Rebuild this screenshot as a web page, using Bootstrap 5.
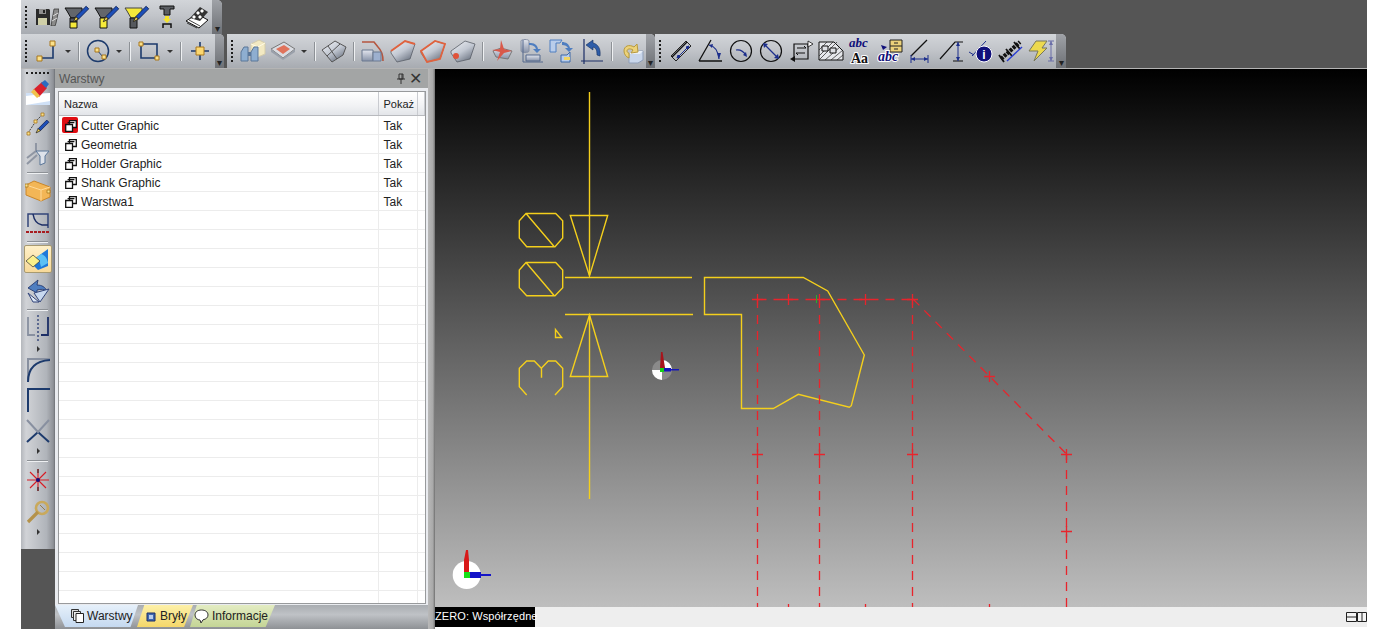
<!DOCTYPE html>
<html lang="pl">
<head>
    <meta charset="UTF-8">
    <meta name="viewport" content="width=device-width, initial-scale=1.0">
    <title>Warstwy</title>
    <link href="https://cdn.jsdelivr.net/npm/bootstrap@5.3.3/dist/css/bootstrap.min.css" rel="stylesheet">
    <script src="https://cdn.jsdelivr.net/npm/bootstrap@5.3.3/dist/js/bootstrap.bundle.min.js"></script>
    <style>
        html, body { height: 629px; overflow: hidden; background: #fff; }
        body { font-family: "Liberation Sans", Arial, sans-serif; font-size: 12px; color: #1c1c1c; }
        .cad-app { margin: 0 6px 0 21px; width: 1346px; height: 629px; background: #555; }
        .bar-row { height: 34px; }
        .bar-row-last { border-bottom: 1px solid #b4b4b4; height: 35px; }
        .tbar { height: 34px; background: linear-gradient(#d2d5d9, #c2c5ca 45%, #a7abb1); border-radius: 0 5px 0 0; }
        .tbar-mid { margin-left: 3px; }
        .tgrip { width: 11px; height: 100%; position: relative; }
        .tgrip::before { content: ""; position: absolute; left: 4px; top: 6px; bottom: 6px; border-left: 2px dotted #1e1e1e; }
        .tend { width: 9px; height: 100%; background: linear-gradient(#9fa2a7, #6d7075); position: relative; border-radius: 0 5px 0 0; }
        .tend-wide { width: 10px; margin-left: 2px; }
        .tend::after { content: "\25BE"; position: absolute; left: 0; right: 0; bottom: 0; line-height: 11px; text-align: center; font-size: 10px; color: #222; }
        .tbtn { width: 30px; height: 30px; flex: none; }
        .tcaret { width: 12px; flex: none; }
        .tcaret::after { content: ""; display: block; width: 0; height: 0; margin: 0 auto; border-left: 3px solid transparent; border-right: 3px solid transparent; border-top: 3px solid #333; }
        .tsep { width: 9px; flex: none; }
        .tsep::after { content: ""; display: block; margin: 0 auto; width: 2px; height: 19px; background: #eef0f2; border-left: 1px solid #8d9196; }
        .vbar-col { width: 34px; flex: none; }
        .vbar { height: 480px; background: linear-gradient(90deg, #b4b7bc, #d1d3d7 15%, #b0b4ba 75%, #8e9197 95%, #6d7075); }
        .vgrip { height: 8px; position: relative; }
        .vgrip::before { content: ""; position: absolute; left: 5px; right: 6px; top: 3px; border-top: 2px dotted #1e1e1e; }
        .vtool { height: 30px; }
        .vtool-on { margin: 1px 3px; height: 28px; background: linear-gradient(#fff0c8, #f7d999); border: 1px solid #a89a70; border-radius: 2px; }
        .vgap1 { height: 1px; } .vgap2 { height: 2px; } .vgap3 { height: 3px; }
        .vsep { display: flex; align-items: center; padding: 0 7px 0 6px; }
        .vsep::after { content: ""; flex: 1; height: 2px; background: #eef0f2; border-top: 1px solid #8d9196; }
        .vsep5 { height: 5px; } .vsep7 { height: 7px; } .vsep9 { height: 9px; }
        .vcaret { display: flex; align-items: center; justify-content: center; }
        .vcaret::after { content: ""; border-top: 3px solid transparent; border-bottom: 3px solid transparent; border-left: 3px solid #333; }
        .vcaret10 { height: 10px; } .vcaret12 { height: 12px; }
        .layers-panel { width: 373px; flex: none; background: #e9ebef; }
        .panel-title { height: 19px; background: #a3a5a5; color: #555; padding: 0 4px; font-size: 12px; }
        .panel-glyph { color: #333; width: 18px; text-align: center; }
        .panel-body { height: 517px; padding: 3px 2px 1px 3px; }
        .table-box { height: 513px; border: 1px solid #989a9c; background: #fff; overflow: hidden; }
        .layer-table { table-layout: fixed; width: 366px; border-collapse: collapse; }
        .layer-table > :not(caption) > * > * { padding: 0; box-shadow: none; background: transparent; }
        .layer-table thead th { height: 23px; padding: 2px 0 0 5px; font-size: 11px; font-weight: 400; background: linear-gradient(#fff, #f1f2f4 60%, #e3e5e9); border-right: 1px solid #c9cbd0; border-bottom: 1px solid #b8babe; vertical-align: middle; color: #222; }
        .layer-table tbody td { height: 19px; border-bottom: 1px solid #ececec; border-right: 1px solid #ececec; padding: 3px 0 0 5px; vertical-align: middle; color: #222; line-height: 1; }
        .layer-table tbody td:last-child { border-right: 0; }
        .layer-ico { width: 12px; height: 12px; margin: 0 4px 0 1px; vertical-align: -2px; }
        .layer-on { position: relative; }
        .layer-on::before { content: ""; position: absolute; left: 3px; top: 1px; width: 16px; height: 16px; background: #e00d12; border-radius: 2px; }
        .layer-on .layer-ico, .layer-on span { position: relative; }
        .tab-strip { height: 24px; background: linear-gradient(#a9adb1, #bfc2c6 40%, #8e9195); }
        .dock-tab { height: 22px; font-size: 12px; color: #222; }
        .dock-tab svg { margin-right: 3px; }
        .tab-blue { width: 83px; padding-left: 16px; background: linear-gradient(#e6f0fa, #c5d9f0); clip-path: polygon(0 0, 100% 0, 91% 100%, 12% 100%); }
        .tab-yellow { width: 56px; margin-left: -1px; padding-left: 9px; background: linear-gradient(#fdf0a8, #f4d76a); clip-path: polygon(13% 0, 100% 0, 84% 100%, 0 100%, 0 100%); }
        .tab-green { width: 85px; margin-left: -3px; padding-left: 4px; background: linear-gradient(#e3ecc2, #c4d596); clip-path: polygon(8% 0, 100% 0, 89% 100%, 0 100%); }
        .dock-split { width: 7px; flex: none; background: linear-gradient(90deg, #b9b9b9, #a9a9a9 70%, #6f6f6f); }
        .view-col { width: 932px; flex: none; background: #fff; }
        .view-canvas { display: block; width: 932px; height: 538px; }
        .view-status { height: 20px; background: #eeeeee; }
        .status-label { width: 100px; height: 20px; background: #000; color: #fff; font-size: 11px; letter-spacing: .1px; line-height: 18px; white-space: nowrap; }
        .halo-text { paint-order: stroke; stroke: #fff; stroke-width: 2px; }
    </style>
</head>
<body>

<svg width="0" height="0" class="position-absolute">
    <defs>
        <symbol id="pen" viewBox="0 0 14 14">
            <path d="M3 9 11 1l2 2-8 8z" fill="#1d4fb8" stroke="#0d1f55" stroke-width=".7"/>
            <path d="M3 9l-2 4 4-2z" fill="#f3d24a" stroke="#222" stroke-width=".7"/>
        </symbol>
        <symbol id="layers" viewBox="0 0 12 12">
            <path d="M4.500.7h6.800v6.800H4.500z" fill="#fff" stroke="#111" stroke-width="1.300"/>
            <path d="M2.600 2.600h6.800" stroke="#111" stroke-width="1.300"/>
            <path d="M.7 4.500h6.800v6.800H.7z" fill="#fff" stroke="#111" stroke-width="1.300"/>
        </symbol>
        <symbol id="patch" viewBox="0 0 26 24">
            <path d="M1 12 15 2l10 3-5 15-13 3-6-9z" fill="url(#patchFill)" stroke="#5a5f68" stroke-width=".8"/>
        </symbol>
        <linearGradient id="patchFill" x1="0" y1="0" x2=".7" y2="1">
            <stop offset="0" stop-color="#f1f3f6"/><stop offset=".55" stop-color="#c2c8d2"/><stop offset="1" stop-color="#6c7482"/>
        </linearGradient>
        <linearGradient id="steel" x1="0" y1="0" x2="0" y2="1">
            <stop offset="0" stop-color="#e3e6ee"/><stop offset="1" stop-color="#8792a8"/>
        </linearGradient>
    </defs>
</svg>

<div class="cad-app d-flex flex-column">

    <!-- gorny pasek -->
    <div class="bar-row d-flex">
        <div class="tbar d-flex align-items-center">
            <div class="tgrip"></div>
            <div class="tbtn d-flex align-items-center justify-content-center">
                <svg width="24" height="18" viewBox="0 0 24 18"><path d="M1 1h13l1 1v15H1z" fill="#2b2b2b"/><path d="M4 1h7v5H4z" fill="#8f8f8f"/><path d="M8 2h2v3H8z" fill="#222"/><path d="M3 10h9v7H3z" fill="#cfcfa8"/><path d="M16 18 19 1h5l-3 14-1 3z" fill="#8b8b8b" stroke="#2b2b2b" stroke-width=".7"/><path d="M18 8l5-3M17 13l5-3" stroke="#ddd"/></svg>
            </div>
            <div class="tbtn d-flex align-items-center justify-content-center">
                <svg width="26" height="24" viewBox="0 0 26 24"><path d="M1 3h17v3l-4 7H7L3 6z" fill="#63666b" stroke="#111"/><path d="M6 13h7v4H6z" fill="#55585d" stroke="#111"/><path d="M6 17h7v6H6z" fill="#f6ea3a" stroke="#111"/><use href="#pen" x="8" y="0" width="18" height="18"/></svg>
            </div>
            <div class="tbtn d-flex align-items-center justify-content-center">
                <svg width="26" height="24" viewBox="0 0 26 24"><path d="M1 3h17v3l-4 7H7L3 6z" fill="#63666b" stroke="#111"/><path d="M6 13h7v10H6z" fill="#f6ea3a" stroke="#111"/><use href="#pen" x="8" y="0" width="18" height="18"/></svg>
            </div>
            <div class="tbtn d-flex align-items-center justify-content-center">
                <svg width="26" height="24" viewBox="0 0 26 24"><path d="M1 3h17v3l-4 7H7L3 6z" fill="#f6ea3a" stroke="#444"/><path d="M6 13h7v10H6z" fill="#55585d" stroke="#111"/><use href="#pen" x="8" y="0" width="18" height="18"/></svg>
            </div>
            <div class="tbtn d-flex align-items-center justify-content-center">
                <svg width="18" height="24" viewBox="0 0 18 24"><path d="M2 1h14v3h-4v6H6V4H2z" fill="#5b5e63" stroke="#111"/><path d="M7 11h4v3h2l-4 4-4-4h2z" fill="#f4e32e"/><path d="M5 23v-4h8v4" fill="none" stroke="#111" stroke-width="1.500"/></svg>
            </div>
            <div class="tbtn d-flex align-items-center justify-content-center">
                <svg width="26" height="24" viewBox="0 0 26 24"><path d="M2 16 13 9l11 6-9 8z" fill="#fff" stroke="#111"/><path d="M6 13 16 2l8 5-8 9z" fill="#333"/><path d="M8 12l2-2 2 2-2 2zM12 8l2-2 2 2-2 2zM16 6l2-2 2 2-2 2zM14 12l2-2 2 2-2 2z" fill="#fff"/><path d="M3 18l10 5M5 15l11 6" stroke="#111" stroke-width=".8"/></svg>
            </div>
            <div class="tend tend-wide ms-auto"></div>
        </div>
    </div>

    <div class="bar-row bar-row-last d-flex">
        <div class="tbar d-flex align-items-center">
            <div class="tgrip"></div>
            <div class="tbtn d-flex align-items-center justify-content-center">
                <svg width="22" height="22" viewBox="0 0 22 22"><path d="M17 5v13H5" fill="none" stroke="#1c3a6c" stroke-width="1.600"/><path d="M14 1h5v5h-5zM1 16h5v5H1z" fill="#fbe18a" stroke="#a8761c"/></svg>
            </div>
            <div class="tcaret"></div>
            <div class="tsep"></div>
            <div class="tbtn d-flex align-items-center justify-content-center">
                <svg width="24" height="24" viewBox="0 0 24 24"><circle cx="12" cy="12" r="10.500" fill="none" stroke="#1c3a6c" stroke-width="1.500"/><path d="M11 11l6 7" stroke="#1c3a6c"/><path d="M9 9h4v4H9zM16 16h4v4h-4z" fill="#fbe18a" stroke="#a8761c"/></svg>
            </div>
            <div class="tcaret"></div>
            <div class="tsep"></div>
            <div class="tbtn d-flex align-items-center justify-content-center">
                <svg width="22" height="20" viewBox="0 0 22 20"><path d="M3 3h16v14H3z" fill="none" stroke="#1c3a6c" stroke-width="1.600"/><path d="M1 1h4v4H1zM17 15h4v4h-4z" fill="#fbe18a" stroke="#a8761c"/></svg>
            </div>
            <div class="tcaret"></div>
            <div class="tsep"></div>
            <div class="tbtn d-flex align-items-center justify-content-center">
                <svg width="18" height="18" viewBox="0 0 18 18"><path d="M0 9h18M9 0v18" stroke="#1c3a6c" stroke-width="1.600"/><path d="M5 5h8v8H5z" fill="#fbd770" stroke="#a8761c"/></svg>
            </div>
            <div class="tend ms-auto"></div>
        </div>
        <div class="tbar d-flex align-items-center tbar-mid">
            <div class="tgrip"></div>
            <div class="tbtn d-flex align-items-center justify-content-center">
                <svg width="26" height="24" viewBox="0 0 26 24"><path d="M11 5l8-4 6 3v11l-7 3-7-3z" fill="#f2e9c2" stroke="#d4ccaa"/><path d="M11 5l7 3 7-4M18 8v10" fill="none" stroke="#fffbe6"/><path d="M4 8h4v14H1V13zM14 8h4v14h-7V13z" fill="#8eaed0" stroke="#5a7698"/><path d="M8 13h3v4H8z" fill="#5a7698"/></svg>
            </div>
            <div class="tbtn d-flex align-items-center justify-content-center">
                <svg width="26" height="20" viewBox="0 0 26 20"><path d="M1 8 14 1l11 7-12 9z" fill="#d9dce2" stroke="#777"/><path d="M6 8l8-4 6 4-7 5z" fill="#e0735c"/><path d="M1 8v3l12 8v-2zM25 8v3L13 19v-2z" fill="#9aa0aa"/></svg>
            </div>
            <div class="tcaret"></div>
            <div class="tsep"></div>
            <div class="tbtn d-flex align-items-center justify-content-center">
                <svg width="26" height="24" viewBox="0 0 26 24"><path d="M1 11 14 2l11 6-3 8-11 7z" fill="url(#patchFill)" stroke="#555"/><path d="M7 7l9 13M19 5 6 17" stroke="#555" fill="none"/></svg>
            </div>
            <div class="tsep"></div>
            <div class="tbtn d-flex align-items-center justify-content-center">
                <svg width="26" height="24" viewBox="0 0 26 24"><path d="M2 11h11v11H2z" fill="url(#steel)" stroke="#6a7890"/><path d="M2 3h12l4 5c3 3 5 7 5 14" fill="none" stroke="#b5563f" stroke-width="1.600"/><path d="M13 13h8v9h-8z" fill="#9db0cf" stroke="#6a7890"/></svg>
            </div>
            <div class="tbtn d-flex align-items-center justify-content-center">
                <svg width="26" height="24" viewBox="0 0 26 24"><use href="#patch"/><path d="M1 12 15 2l10 3" fill="none" stroke="#e0633f" stroke-width="2"/></svg>
            </div>
            <div class="tbtn d-flex align-items-center justify-content-center">
                <svg width="26" height="24" viewBox="0 0 26 24"><use href="#patch"/><path d="M1 12l6 11 13-3 5-15L15 2z" fill="none" stroke="#e0633f" stroke-width="1.800"/></svg>
            </div>
            <div class="tbtn d-flex align-items-center justify-content-center">
                <svg width="26" height="24" viewBox="0 0 26 24"><use href="#patch"/><circle cx="6" cy="17" r="3" fill="#e0533a"/></svg>
            </div>
            <div class="tsep"></div>
            <div class="tbtn d-flex align-items-center justify-content-center">
                <svg width="24" height="24" viewBox="0 0 24 24"><path d="M3 12l8-3 11 3-4 8-12-2z" fill="url(#steel)" stroke="#777"/><path d="M11 1l3 9 8 2-8 2-7 8 3-9-8-2 8-1z" fill="#d9594a"/></svg>
            </div>
            <div class="tbtn d-flex align-items-center justify-content-center">
                <svg width="26" height="26" viewBox="0 0 26 26"><path d="M2 3c0-2 8-2 8 0v10c0 2-8 2-8 0z" fill="url(#steel)" stroke="#8690a4"/><path d="M10 5c5 0 8 1 9 6h3l-4 4-4-4h3c-1-3-3-4-7-4z" fill="#4f7ec0"/><path d="M7 17h14v6H7z" fill="url(#steel)" stroke="#54688c"/><path d="M4 2v22h20" fill="none" stroke="#54688c"/></svg>
            </div>
            <div class="tbtn d-flex align-items-center justify-content-center">
                <svg width="26" height="24" viewBox="0 0 26 24"><path d="M1 1h12l-2 3H7v9H1z" fill="#b9cdea" stroke="#4f7ec0"/><path d="M13 3c4 0 7 2 8 6h3l-4 4-4-4h3c-1-2-3-3-6-3z" fill="#4f7ec0"/><path d="M12 16h6l3-3v10H12z" fill="#b9cdea" stroke="#3d68a8"/><path d="M15 18h6v3h-6z" fill="#f0d564"/></svg>
            </div>
            <div class="tbtn d-flex align-items-center justify-content-center">
                <svg width="24" height="26" viewBox="0 0 24 26"><path d="M4 1v22h19M1 23h3M4 23v3" fill="none" stroke="#1c2e66" stroke-width="1.200"/><path d="M6 7l7-5v3c5 1 8 6 7 13l-3-1c0-5-1-7-4-8v3z" fill="#2d5ca8" stroke="#16305e" stroke-width=".6"/></svg>
            </div>
            <div class="tsep"></div>
            <div class="tbtn d-flex align-items-center justify-content-center">
                <svg width="26" height="26" viewBox="0 0 26 26"><path d="M14 13h11v9l-5 3H11v-9z" fill="#c9d6ea" stroke="#8f9fb8"/><path d="M11 16l3-3h11l-3 3z" fill="#e8eef7"/><path d="M16 9c-5-3-10-1-10 4 0 3 2 6 5 7V15c-1 0-2-1-2-2 0-2 3-3 6-1l-2 3 7-1-1-8z" fill="#ecd27a" stroke="#b79a3e"/></svg>
            </div>
            <div class="tend ms-auto"></div>
        </div>
        <div class="tbar d-flex align-items-center tbar-last">
            <div class="tgrip"></div>
            <div class="tbtn d-flex align-items-center justify-content-center">
                <svg width="24" height="24" viewBox="0 0 24 24"><path d="M2 17 17 2l5 5L7 22z" fill="none" stroke="#111" stroke-width=".9"/><path d="M3 18 18 3" stroke="#111" stroke-width="1.400"/><path d="M8 19l12-12M8 19l1-3 2 2zM20 7l-3 1 2 2z" stroke="#1c2e8c" fill="#1c2e8c"/></svg>
            </div>
            <div class="tbtn d-flex align-items-center justify-content-center">
                <svg width="26" height="24" viewBox="0 0 26 24"><path d="M1 22h23M1 22 13 1" fill="none" stroke="#111" stroke-width="1.300"/><path d="M11 6c6 1 9 6 10 14" fill="none" stroke="#1c2e8c" stroke-width="1.200"/><path d="M19 14l2 6 2-6zM11 6l4-1-1 4z" fill="#1c2e8c"/></svg>
            </div>
            <div class="tbtn d-flex align-items-center justify-content-center">
                <svg width="24" height="24" viewBox="0 0 24 24"><circle cx="12" cy="12" r="10.500" fill="none" stroke="#111" stroke-width="1.200"/><path d="M7 11c4-1 7 1 10 5" fill="none" stroke="#1c2e8c" stroke-width="1.200"/><path d="M14 16l4 2-1-5z" fill="#1c2e8c"/></svg>
            </div>
            <div class="tbtn d-flex align-items-center justify-content-center">
                <svg width="24" height="24" viewBox="0 0 24 24"><circle cx="12" cy="12" r="10.500" fill="none" stroke="#111" stroke-width="1.200"/><path d="M5 5l14 14" stroke="#1c2e8c" stroke-width="1.200"/><path d="M4 4l5 1-4 4zM20 20l-5-1 4-4z" fill="#1c2e8c"/></svg>
            </div>
            <div class="tbtn d-flex align-items-center justify-content-center">
                <svg width="24" height="22" viewBox="0 0 24 22"><path d="M5 4h14v15H5z" fill="none" stroke="#111" stroke-width="1.200"/><path d="M19 1l5 3-5 3z" fill="#fff" stroke="#111" stroke-width=".8"/><path d="M1 19l5-3v6z" fill="#111"/><path d="M8 8h9l-2-2M16 13H7l2 2" fill="none" stroke="#111"/></svg>
            </div>
            <div class="tbtn d-flex align-items-center justify-content-center">
                <svg width="26" height="20" viewBox="0 0 26 20"><path d="M1 1h15l9 9v9H1z" fill="#e6e8ec" stroke="#111"/><path d="M1 9 9 1M1 15 15 1M1 19 19 1M7 19 22 6M13 19l12-10M19 19l6-5" stroke="#222" stroke-width=".7"/><path d="M4 5h6v5H4zM12 7h6v5h-6z" fill="#dfe1e6" stroke="#111"/></svg>
            </div>
            <div class="tbtn d-flex align-items-center justify-content-center">
                <svg width="28" height="28" viewBox="0 0 28 28"><text x="2" y="10" font-family="Liberation Serif, serif" font-style="italic" font-weight="700" font-size="13" fill="#10107a">abc</text><text x="4" y="26" font-family="Liberation Serif, serif" font-weight="700" font-size="14" fill="#111" class="halo-text">Aa</text></svg>
            </div>
            <div class="tbtn d-flex align-items-center justify-content-center">
                <svg width="28" height="28" viewBox="0 0 28 28"><path d="M13 3h12v12H13z" fill="#ecd27a" stroke="#222"/><path d="M13 9h12M17 6h4M17 12h4" stroke="#222"/><path d="M4 8l6 2-4 3z" fill="#10107a"/><text x="1" y="24" font-family="Liberation Serif, serif" font-style="italic" font-weight="700" font-size="14" fill="#10107a" class="halo-text">abc</text></svg>
            </div>
            <div class="tbtn d-flex align-items-center justify-content-center">
                <svg width="24" height="24" viewBox="0 0 24 24"><path d="M2 17 18 1" stroke="#111" stroke-width="1.200"/><path d="M2 16v8M19 16v8" stroke="#1c2e8c"/><path d="M2 20h17" stroke="#1c2e8c"/><path d="M2 20l4-2v4zM19 20l-4-2v4z" fill="#1c2e8c"/></svg>
            </div>
            <div class="tbtn d-flex align-items-center justify-content-center">
                <svg width="24" height="24" viewBox="0 0 24 24"><path d="M1 20 16 3h8M14 22h10" fill="none" stroke="#111" stroke-width="1.200"/><path d="M19 3v19" stroke="#1c2e8c"/><path d="M19 3l-2 4h4zM19 22l-2-4h4z" fill="#1c2e8c"/></svg>
            </div>
            <div class="tbtn d-flex align-items-center justify-content-center">
                <svg width="26" height="24" viewBox="0 0 26 24"><path d="M1 13l5 3M4 17 18 2" stroke="#1c2e8c" fill="none"/><circle cx="16" cy="15" r="8" fill="#10107a" stroke="#fff"/><text x="16" y="20" text-anchor="middle" font-family="Liberation Sans, sans-serif" font-weight="700" font-size="12" fill="#fff">i</text></svg>
            </div>
            <div class="tbtn d-flex align-items-center justify-content-center">
                <svg width="26" height="24" viewBox="0 0 26 24"><path d="M3 20 22 3" stroke="#111" stroke-width="4" stroke-dasharray="3 1"/><path d="M1 16 6 23M8 10l6 7M16 3l6 7" stroke="#111" stroke-width="1.800"/><path d="M9 22 24 8" stroke="#2a3ed0" stroke-width="1.400"/></svg>
            </div>
            <div class="tbtn d-flex align-items-center justify-content-center">
                <svg width="26" height="24" viewBox="0 0 26 24"><path d="M8 2h11l-5 7h5L6 22l4-10H1z" fill="#ecd94e" stroke="#77775a"/><path d="M23 2v20M20 2h6M20 22h6" stroke="#6a6ea8"/><path d="M23 2l-2 4h4zM23 22l-2-4h4z" fill="#6a6ea8"/></svg>
            </div>
            <div class="tend tend-wide ms-auto"></div>
        </div>
    </div>

    <div class="d-flex flex-grow-1">

        <!-- pionowy pasek -->
        <div class="vbar-col">
            <div class="vbar">
                <div class="vgrip"></div>
                <div class="vtool d-flex align-items-center justify-content-center">
                    <svg width="26" height="26" viewBox="0 0 26 26"><path d="M1 14h24v12H1z" fill="#cfe0f6"/><path d="M1 17 25 14v8L1 26z" fill="#fff"/><path d="M8 11 17 3l5 6-8 9z" fill="#d8202c"/><path d="M16 4l4-3 4 4-3 4z" fill="#2c6cc0"/><path d="M6 13l3-3 6 7-3 2z" fill="#f1c14c"/></svg>
                </div>
                <div class="vgap2"></div>
                <div class="vtool d-flex align-items-center justify-content-center">
                    <svg width="24" height="24" viewBox="0 0 24 24"><path d="M2 21 10 9l7-7" fill="none" stroke="#444" stroke-dasharray="2 1"/><path d="M1 20h3v3H1zM8 8h3v3H8zM15 1h3v3h-3z" fill="#fbe18a" stroke="#a8761c" stroke-width=".8"/><use href="#pen" x="9" y="6" width="15" height="17"/></svg>
                </div>
                <div class="vtool d-flex align-items-center justify-content-center">
                    <svg width="24" height="24" viewBox="0 0 24 24"><path d="M10 1v8L1 16" fill="none" stroke="#8f96a3" stroke-width="2"/><path d="M1 22 11 13" stroke="#8f96a3" stroke-width="2"/><path d="M10 9h13l-4 5v7l-5 2v-9z" fill="#dde2ea" stroke="#5a7698"/></svg>
                </div>
                <div class="vsep vsep7"></div>
                <div class="vtool d-flex align-items-center justify-content-center">
                    <svg width="26" height="22" viewBox="0 0 26 22"><path d="M1 5 9 1l16 6v10l-9 4L1 15z" fill="#f3b656" stroke="#c9862a"/><path d="M1 5l15 5 9-3M16 10v11" fill="none" stroke="#ffd998"/><path d="M0 4h3v3H0zM22 10h3v3h-3z" fill="#fbe18a" stroke="#a8761c" stroke-width=".8"/></svg>
                </div>
                <div class="vgap3"></div>
                <div class="vtool d-flex align-items-center justify-content-center">
                    <svg width="24" height="22" viewBox="0 0 24 22"><path d="M2 14V1h20v14" fill="none" stroke="#33457a" stroke-width="1.500"/><path d="M7 1c1 6 3 10 9 11h6" fill="none" stroke="#1c2e66" stroke-width="1.500"/><path d="M0 19h24" stroke="#a81c20" stroke-width="2" stroke-dasharray="3 1"/></svg>
                </div>
                <div class="vsep vsep5"></div>
                <div class="vtool-on d-flex align-items-center justify-content-center">
                    <svg width="26" height="24" viewBox="0 0 26 24"><path d="M5 15 23 2v17l-10 4z" fill="#1f78d8"/><path d="M16 7c4 1 6 4 7 9l-7 4c-1-5-2-8-5-9z" fill="#5cc0f4"/><path d="M1 14l7-6 7 6-7 6z" fill="#fbf08a" stroke="#333" stroke-width=".7"/></svg>
                </div>
                <div class="vgap2"></div>
                <div class="vtool d-flex align-items-center justify-content-center">
                    <svg width="24" height="24" viewBox="0 0 24 24"><path d="M12 1 2 9l9 5v-3c4-1 7-1 10 1-2-4-5-6-10-6z" fill="#4f7ec0" stroke="#1c2e66" stroke-width=".8"/><path d="M23 10 8 14l6 9z" fill="#c7d8ef" stroke="#33457a"/><path d="M2 14l5 9h6z" fill="#dde8f6" stroke="#33457a"/></svg>
                </div>
                <div class="vsep vsep7"></div>
                <div class="vtool d-flex align-items-center justify-content-center">
                    <svg width="24" height="26" viewBox="0 0 24 26"><path d="M2 2V20H9" fill="none" stroke="#8890a0" stroke-width="1.800"/><path d="M22 2V20H15" fill="none" stroke="#1c2e66" stroke-width="1.800"/><path d="M12 0v26" stroke="#33457a" stroke-width="1.400" stroke-dasharray="2 2"/></svg>
                </div>
                <div class="vcaret vcaret12"></div>
                <div class="vtool d-flex align-items-center justify-content-center">
                    <svg width="24" height="24" viewBox="0 0 24 24"><path d="M1 1h23" stroke="#8890a0" stroke-width="2"/><path d="M2 24V2" stroke="#8890a0" stroke-width="2"/><path d="M2 24C2 12 8 3 24 2" fill="none" stroke="#1c3a6c" stroke-width="2"/></svg>
                </div>
                <div class="vtool d-flex align-items-center justify-content-center">
                    <svg width="24" height="24" viewBox="0 0 24 24"><path d="M2 24V1h22" fill="none" stroke="#1c3a6c" stroke-width="2"/></svg>
                </div>
                <div class="vgap1"></div>
                <div class="vtool d-flex align-items-center justify-content-center">
                    <svg width="24" height="24" viewBox="0 0 24 24"><path d="M1 23 12 13l11 10" fill="none" stroke="#1c3a6c" stroke-width="2"/><path d="M1 1 12 13 23 1" fill="none" stroke="#8890a0" stroke-width="2"/></svg>
                </div>
                <div class="vcaret vcaret10"></div>
                <div class="vsep vsep9"></div>
                <div class="vtool d-flex align-items-center justify-content-center">
                    <svg width="22" height="22" viewBox="0 0 22 22"><path d="M0 11h22M11 0v22M3 3l16 16M19 3 3 19" stroke="#d81c24" stroke-width="1.100"/><path d="M11 0v22" stroke="#111" stroke-width=".9" stroke-dasharray="4 14"/><circle cx="11" cy="11" r="2" fill="#101080"/></svg>
                </div>
                <div class="vgap2"></div>
                <div class="vtool d-flex align-items-center justify-content-center">
                    <svg width="24" height="24" viewBox="0 0 24 24"><circle cx="16" cy="8" r="6" fill="none" stroke="#c9a95c" stroke-width="2.600"/><path d="M12 12 2 22" stroke="#b4924a" stroke-width="3.200"/><path d="M14 5l5 5" stroke="#8f6f2c" stroke-width=".8"/></svg>
                </div>
                <div class="vcaret vcaret10"></div>
            </div>
        </div>

        <!-- panel warstw -->
        <div class="layers-panel d-flex flex-column">
            <div class="panel-title d-flex align-items-center">
                <span>Warstwy</span>
                <svg class="ms-auto" width="10" height="12" viewBox="0 0 10 12"><path d="M3 1h4v5H3zM1 6h8M5 6v5M6 1v5" fill="none" stroke="#333"/></svg>
                <span class="panel-glyph fs-6">&#10005;</span>
            </div>
            <div class="panel-body">
                <div class="table-box">
                    <table id="layerTable" class="table table-borderless mb-0 layer-table">
                        <colgroup><col style="width:319px"><col style="width:39px"><col></colgroup>
                        <thead>
                        <tr><th>Nazwa</th><th>Pokaż</th><th></th></tr>
                        </thead>
                        <tbody>
                        <tr>
                            <td class="layer-on"><svg class="layer-ico"><use href="#layers"/></svg><span>Cutter Graphic</span></td>
                            <td>Tak</td><td></td>
                        </tr>
                        <tr><td><svg class="layer-ico"><use href="#layers"/></svg>Geometria</td><td>Tak</td><td></td></tr>
                        <tr><td><svg class="layer-ico"><use href="#layers"/></svg>Holder Graphic</td><td>Tak</td><td></td></tr>
                        <tr><td><svg class="layer-ico"><use href="#layers"/></svg>Shank Graphic</td><td>Tak</td><td></td></tr>
                        <tr><td><svg class="layer-ico"><use href="#layers"/></svg>Warstwa1</td><td>Tak</td><td></td></tr>
                        <!-- reszta wierszy ze skryptu -->
                        </tbody>
                    </table>
                </div>
            </div>
            <div class="tab-strip d-flex">
                <div class="dock-tab tab-blue d-flex align-items-center">
                    <svg width="13" height="14" viewBox="0 0 13 14"><path d="M.5.5h7v8h-7z" fill="#ddd" stroke="#333"/><path d="M2.500 2.500h7v9h-7z" fill="#eee" stroke="#333"/><path d="M5 4.500h7.500v9H5z" fill="#fff" stroke="#222"/></svg>Warstwy
                </div>
                <div class="dock-tab tab-yellow d-flex align-items-center">
                    <svg width="11" height="11" viewBox="0 0 11 11"><path d="M1 2h8v8H1z" fill="#3f68b0" stroke="#1c2e66"/><path d="M3 4h4v4H3z" fill="#b9cdea"/></svg>Bryły
                </div>
                <div class="dock-tab tab-green d-flex align-items-center">
                    <svg width="15" height="15" viewBox="0 0 15 15"><path d="M7.500 1C3.500 1 1 3 1 6s2.500 5 5 5l1 3 2-3.200c3-.5 5-2.300 5-4.800 0-3-2.500-5-6.500-5z" fill="#fff" stroke="#333"/></svg>Informacje
                </div>
            </div>
        </div>
        <div class="dock-split"></div>

        <!-- widok -->
        <div class="view-col">
            <svg class="view-canvas" viewBox="435 69 932 538">
                <defs>
                    <linearGradient id="viewBg" x1="0" y1="0" x2="0" y2="1">
                        <stop offset="0" stop-color="#000"/><stop offset="1" stop-color="#bebebe"/>
                    </linearGradient>
                </defs>
                <rect x="435" y="69" width="932" height="538" fill="url(#viewBg)"/>

                <g fill="none" stroke="#f4cf1c" stroke-width="1.400">
                    <path d="M589.500 92V275M589.500 316V499"/>
                    <path d="M565 277.500H692M565 314.500H693"/>
                    <path d="M570.300 215.500H607.700L589.500 276zM570.300 376.500H607.700L589.500 315z"/>
                    <path d="M526 213.500H555.700L562.700 220.700V238L555 246.700H526.700L519.300 238V220.700zM526 213.500 554.300 246.700"/>
                    <path d="M526 262.500H555.700L562.700 270V287.700L555 295.700H526.700L519.300 287.700V270zM526 262.500 554.300 295.700"/>
                    <path d="M555.500 329.500V337.500H561.700z"/>
                    <path d="M526.700 395 519.300 386.700V368.300L526.700 361H534.300L541.300 368.300 548.300 361H555.700L562.700 368.300V386.700L555 395M541.500 368.300V377.700"/>
                    <path d="M704.500 277.500H803.300L827.700 291 864.300 355 851.300 405.700 849.300 407.300 798.300 394.300 773.300 408.500H741.500V314.500H704.500z"/>
                </g>

                <g fill="none" stroke="#e8242c" stroke-width="1.300">
                    <g stroke-dasharray="9 7">
                        <path d="M757.500 299.500H913"/>
                        <path d="M757.500 299V607M819.500 299V607M912.500 299V607M1066.500 454V607"/>
                        <path d="M913 299 1066.500 454"/>
                    </g>
                    <path d="M752 299.500h11M782 299.500h11M814 299.500h11M859 299.500h11M907 299.500h11M757.500 294v11M788.500 294v11M819.500 294v11M865.500 294v11M912.500 294v11"/>
                    <path d="M752 454.500h11M814 454.500h11M907 454.500h11M1061 454.500h11M757.500 449v11M819.500 449v11M912.500 449v11M1066.500 449v11"/>
                    <path d="M1061 531.500h11M1066.500 526v11M984 376.500h11M989.500 371v11"/>
                    <path d="M788.500 604v3M865.500 604v3M989.500 604v3"/>
                </g>
                <path d="M816.500 295v8" stroke="#26b02c"/>

                <circle cx="662" cy="370" r="10" fill="#8a8a8a"/>
                <path d="M662 370V360A10 10 0 0 1 672 370zM662 370H652A10 10 0 0 0 662 380z" fill="#fff"/>
                <path d="M661 352h1.500l2.500 16h-5z" fill="#a8141c"/>
                <path d="M664 368h7v1h8v1.500h-8v1h-7z" fill="#1616b8"/>
                <rect x="660" y="368" width="4" height="4" fill="#18d018"/>

                <circle cx="466.700" cy="575" r="14" fill="#fff"/>
                <path d="M466 550h2l1 10v12h-5v-12z" fill="#d81818"/>
                <path d="M470 572h11v2h10v2h-10v2h-11z" fill="#1414c8"/>
                <rect x="464" y="572" width="6" height="6" fill="#18e018"/>
            </svg>
            <div class="view-status d-flex">
                <div class="status-label">ZERO: Współrzędne</div>
                <svg class="ms-auto" width="21" height="20" viewBox="0 0 21 20"><path d="M.5 5.500h10v9H.5zM.5 10h10M11.500 5.500h9v9h-9zM16 5.500v9" fill="#f4f4f4" stroke="#222"/></svg>
            </div>
        </div>
    </div>
</div>

<script>
    // puste wiersze do konca tabeli
    const tableBody = document.querySelector("#layerTable tbody");
    for (let i = 0; i < 21; i++) {
        const row = document.createElement("tr");
        row.innerHTML = "<td></td><td></td><td></td>";
        tableBody.appendChild(row);
    }
</script>

</body>
</html>
